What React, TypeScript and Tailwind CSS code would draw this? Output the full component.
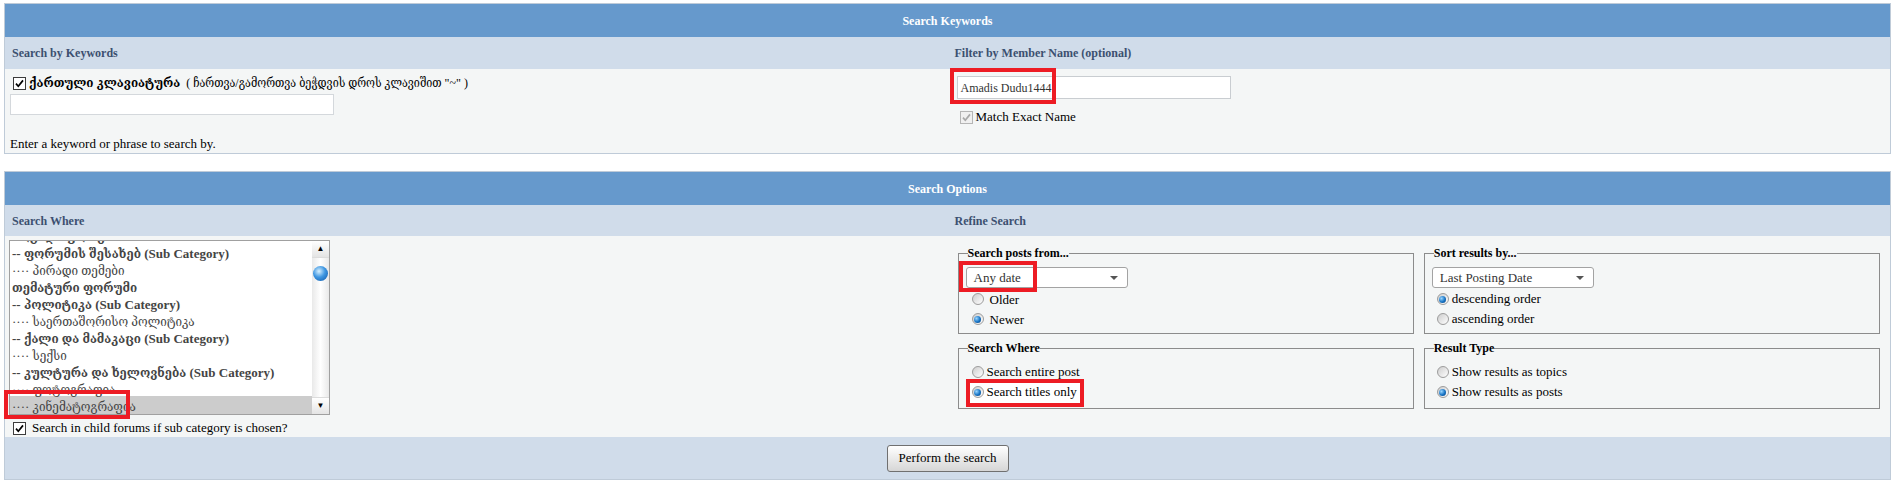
import React from "react";

function Checkbox({ checked = false, disabled = false }: { checked?: boolean; disabled?: boolean }) {
  const box = disabled ? "#b5b5b5" : "#3c3c3c";
  const tick = disabled ? "#a8a8a8" : "#000";
  return (
    <svg width="13" height="13" viewBox="0 0 13 13" className="shrink-0">
      <rect x="0.5" y="0.5" width="12" height="12" fill={disabled ? "#f0f0f0" : "#fff"} stroke={box} />
      {checked && <path d="M3 6.6 L5.3 9.2 L10 3.4" fill="none" stroke={tick} strokeWidth="1.7" />}
    </svg>
  );
}

function Radio({ checked = false }: { checked?: boolean }) {
  return (
    <span className="inline-flex h-[12px] w-[12px] shrink-0 items-center justify-center rounded-full border border-[#9c9c9c] bg-linear-to-br from-[#cdcdcd] to-white">
      {checked && (
        <span className="h-[7px] w-[7px] rounded-full bg-[radial-gradient(circle_at_35%_35%,#9ad6ff,#1673c4_55%,#0a3f7a)]" />
      )}
    </span>
  );
}

function Select({ value }: { value: string }) {
  return (
    <div className="flex h-[21px] w-[162px] items-center justify-between rounded-[3px] border border-[#a3a3a3] bg-white pl-[7px] pr-[9px] text-[13px] text-[#333]">
      <span>{value}</span>
      <span className="h-0 w-0 border-x-[4px] border-t-[4px] border-x-transparent border-t-[#555]" />
    </div>
  );
}

function RadioRow({ checked, label, gap = "gap-[4px]" }: { checked?: boolean; label: string; gap?: string }) {
  return (
    <div className={`flex h-[20px] items-center ${gap}`}>
      <Radio checked={checked} />
      <span>{label}</span>
    </div>
  );
}

const FORUMS: { text: string; bold?: boolean }[] = [
  { text: "ზოგადი ფორუმი", bold: true },
  { text: "-- ფორუმის შესახებ (Sub Category)", bold: true },
  { text: "···· პირადი თემები" },
  { text: "თემატური ფორუმი", bold: true },
  { text: "-- პოლიტიკა (Sub Category)", bold: true },
  { text: "···· საერთაშორისო პოლიტიკა" },
  { text: "-- ქალი და მამაკაცი (Sub Category)", bold: true },
  { text: "···· სექსი" },
  { text: "-- კულტურა და ხელოვნება (Sub Category)", bold: true },
  { text: "···· ფოტოგრაფია" },
];

function ForumList() {
  return (
    <div className="relative h-[175px] w-[321px]">
      <div className="flex h-full w-full border border-[#a0a0a0] bg-white">
        <div className="flex-1 overflow-hidden text-[13px] leading-[17px] text-[#444]">
          <div className="-mt-[13px]">
            {FORUMS.map((f) => (
              <div key={f.text} className={`h-[17px] whitespace-nowrap pl-[2px] ${f.bold ? "font-bold" : ""}`}>
                {f.text}
              </div>
            ))}
            <div className="-mt-[2px] h-[19px] whitespace-nowrap bg-[#cccccc] pl-[2px] pt-[2px]">···· კინემატოგრაფია</div>
          </div>
        </div>
        <div className="flex w-[17px] flex-col bg-linear-to-r from-[#e9e9e9] via-white to-[#e9e9e9]">
          <div className="flex h-[17px] items-center justify-center border-b border-[#dcdcdc] bg-linear-to-b from-white to-[#e4e4e4] text-[8px] leading-none text-black">
            ▲
          </div>
          <div className="flex flex-1 justify-center pt-[8px]">
            <span className="h-[15px] w-[15px] rounded-full bg-[radial-gradient(circle_at_40%_35%,#d8f1ff,#3f97e2_45%,#0c55a6)]" />
          </div>
          <div className="flex h-[17px] items-center justify-center border-t border-[#dcdcdc] bg-linear-to-b from-white to-[#e4e4e4] text-[8px] leading-none text-black">
            ▼
          </div>
        </div>
      </div>
      <div className="pointer-events-none absolute left-[-5px] top-[150px] h-[29px] w-[126px] border-[4px] border-[#ed1c24]" />
    </div>
  );
}

export default function App() {
  return (
    <div className="h-[486px] w-[1898px] overflow-hidden bg-white pl-[4px] pt-[3px] font-['Liberation_Serif','DejaVu_Serif_Condensed','DejaVu_Serif',serif] text-[13px] leading-[16px] text-black">
      {/* Search Keywords */}
      <section className="w-[1887px] border border-[#bfcbd8]">
        <div className="flex h-[33px] items-center justify-center bg-[#6699cc] text-[12px] font-bold text-white">
          Search Keywords
        </div>
        <div className="grid h-[32px] grid-cols-2 items-center bg-[#d0dcea] text-[12px] font-bold text-[#3c5070]">
          <div className="pl-[7px]">Search by Keywords</div>
          <div className="pl-[7px]">Filter by Member Name (optional)</div>
        </div>
        <div className="grid h-[84px] grid-cols-2 bg-[#f4f6f6]">
          <div className="pl-[5px] pt-[7px]">
            <div className="flex h-[14px] items-center gap-[3px] pl-[3px]">
              <Checkbox checked />
              <span className="font-bold">ქართული კლავიატურა</span>
              <span className="text-[12px]">&nbsp;( ჩართვა/გამორთვა ბეჭდვის დროს კლავიშით "~" )</span>
            </div>
            <div className="mt-[4px] h-[21px] w-[324px] border border-[#d4d8dc] bg-white" />
            <div className="mt-[21px]">Enter a keyword or phrase to search by.</div>
          </div>
          <div className="pl-[9px] pt-[7px]">
            <div className="relative h-[23px] w-[274px]">
              <div className="flex h-full items-center border border-[#c9cdd1] bg-white pl-[3px] text-[12px] text-[#333]">
                Amadis Dudu1444
              </div>
              <div className="pointer-events-none absolute left-[-7px] top-[-8px] h-[36px] w-[106px] border-[4px] border-[#ed1c24]" />
            </div>
            <div className="mt-[11px] flex h-[14px] items-center gap-[3px] pl-[3px]">
              <Checkbox checked disabled />
              <span>Match Exact Name</span>
            </div>
          </div>
        </div>
      </section>

      {/* Search Options */}
      <section className="mt-[17px] w-[1887px] border border-[#bfcbd8]">
        <div className="flex h-[33px] items-center justify-center bg-[#6699cc] text-[12px] font-bold text-white">
          Search Options
        </div>
        <div className="grid h-[31px] grid-cols-2 items-center bg-[#d0dcea] text-[12px] font-bold text-[#3c5070]">
          <div className="pl-[7px]">Search Where</div>
          <div className="pl-[7px]">Refine Search</div>
        </div>
        <div className="grid h-[201px] grid-cols-2 bg-[#f4f6f6]">
          <div className="pl-[4px] pt-[4px]">
            <ForumList />
            <div className="mt-[5px] flex h-[16px] items-center gap-[6px] pl-[4px]">
              <Checkbox checked />
              <span>Search in child forums if sub category is chosen?</span>
            </div>
          </div>
          <div className="grid grid-cols-2 content-start gap-x-[10px] gap-y-[7px] px-[10px] pt-[10px]">
            <fieldset className="h-[88px] border border-[#8c8c8c] pl-[9px]">
              <legend className="text-[12px] font-bold leading-[15px]">Search posts from...</legend>
              <div className="relative ml-[-2px] mt-[6px] w-[162px]">
                <Select value="Any date" />
                <div className="pointer-events-none absolute left-[-7px] top-[-6px] h-[31px] w-[78px] border-[4px] border-[#ed1c24]" />
              </div>
              <div className="ml-[4px] mt-[1px] leading-[19px]">
                <RadioRow label="Older" gap="gap-[6px]" />
                <RadioRow checked label="Newer" gap="gap-[6px]" />
              </div>
            </fieldset>
            <fieldset className="h-[88px] border border-[#8c8c8c] pl-[9px]">
              <legend className="text-[12px] font-bold leading-[15px]">Sort results by...</legend>
              <div className="ml-[-2px] mt-[6px]">
                <Select value="Last Posting Date" />
              </div>
              <div className="ml-[3px] mt-[1px]">
                <RadioRow checked label="descending order" gap="gap-[3px]" />
                <RadioRow label="ascending order" gap="gap-[3px]" />
              </div>
            </fieldset>
            <fieldset className="h-[68px] border border-[#8c8c8c] pl-[9px]">
              <legend className="text-[12px] font-bold leading-[15px]">Search Where</legend>
              <div className="ml-[4px] mt-[6px]">
                <RadioRow label="Search entire post" gap="gap-[3px]" />
                <div className="relative">
                  <div className="pointer-events-none absolute left-[-6px] top-[-3px] h-[28px] w-[118px] border-[4px] border-[#ed1c24] bg-white" />
                  <div className="relative">
                    <RadioRow checked label="Search titles only" gap="gap-[3px]" />
                  </div>
                </div>
              </div>
            </fieldset>
            <fieldset className="h-[68px] border border-[#8c8c8c] pl-[9px]">
              <legend className="text-[12px] font-bold leading-[15px]">Result Type</legend>
              <div className="ml-[3px] mt-[6px]">
                <RadioRow label="Show results as topics" gap="gap-[3px]" />
                <RadioRow checked label="Show results as posts" gap="gap-[3px]" />
              </div>
            </fieldset>
          </div>
        </div>
        <div className="flex h-[42px] items-center justify-center bg-[#d0dcea]">
          <button className="h-[27px] w-[122px] rounded-[3px] border border-[#707070] bg-linear-to-b from-white to-[#d6d6d6] text-[13px] text-black">
            Perform the search
          </button>
        </div>
      </section>
    </div>
  );
}
